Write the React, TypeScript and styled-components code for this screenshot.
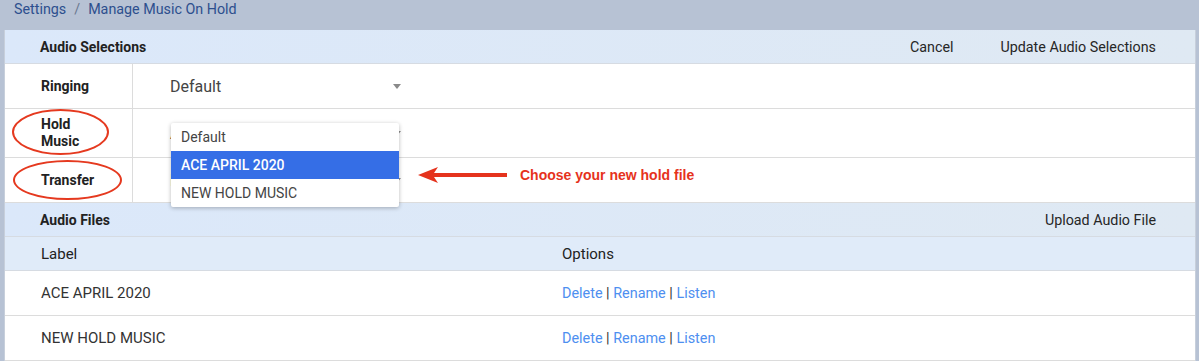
import styled, { createGlobalStyle } from 'styled-components'

const GlobalStyle = createGlobalStyle`
  html, body {
    margin: 0;
    padding: 0;
    background: #b7c2d4;
    font-family: Roboto, "Noto Sans", Arial, sans-serif;
  }
`

const Page = styled.main`
  width: 1199px;
  height: 361px;
  overflow: hidden;
`

const Breadcrumb = styled.nav`
  height: 30px;
  padding: 1px 0 0 14px;
  display: flex;
  align-items: flex-start;
  gap: 8px;
  font-size: 14.3px;
  line-height: 17px;
  box-sizing: border-box;
`

const Crumb = styled.span`
  color: #2d4f8e;
`

const CrumbSep = styled.span`
  color: #6a7890;
`

const Panel = styled.section`
  margin-left: 4px;
  width: 1190px;
  background: #fff;
  border: 1px solid #c7cfdb;
  border-top: none;
  border-bottom: none;
`

const SectionHeader = styled.div<{ $h: number }>`
  height: ${({ $h }) => $h}px;
  display: flex;
  align-items: center;
  justify-content: space-between;
  padding: 0 39px 0 35px;
  background: linear-gradient(90deg, #dbe8fa 0%, #dfe9f3 100%);
  border-bottom: 1px solid #d6dbe2;
  box-sizing: border-box;
`

const SectionTitle = styled.h2`
  margin: 0;
  font-size: 14px;
  font-weight: 700;
  color: #222;
`

const HeaderActions = styled.div`
  display: flex;
  gap: 47px;
`

const HeaderButton = styled.button`
  border: none;
  background: none;
  padding: 0;
  font-family: inherit;
  font-size: 14.3px;
  color: #262626;
  cursor: pointer;
`

const FieldRow = styled.div<{ $h: number }>`
  height: ${({ $h }) => $h}px;
  display: flex;
  border-bottom: 1px solid #dcdcdc;
  box-sizing: border-box;
`

const FieldLabel = styled.div`
  position: relative;
  width: 128px;
  flex-shrink: 0;
  display: flex;
  align-items: center;
  padding-left: 36px;
  box-sizing: border-box;
  border-right: 1px solid #dcdcdc;
  font-size: 14px;
  font-weight: 700;
  line-height: 17px;
  color: #222;
`

const Circle = styled.span<{ $l: number; $t: number; $w: number; $h: number }>`
  position: absolute;
  left: ${({ $l }) => $l}px;
  top: ${({ $t }) => $t}px;
  width: ${({ $w }) => $w}px;
  height: ${({ $h }) => $h}px;
  border: 2px solid #e5391f;
  border-radius: 50%;
  box-sizing: border-box;
  pointer-events: none;
`

const FieldValue = styled.div`
  position: relative;
  flex: 1;
  display: flex;
  align-items: center;
  padding-left: 37px;
`

const Select = styled.div`
  width: 232px;
  display: flex;
  align-items: center;
  justify-content: space-between;
  font-size: 16px;
  color: #444;
`

const Caret = styled.span`
  width: 0;
  height: 0;
  margin-right: 1px;
  border-left: 4px solid transparent;
  border-right: 4px solid transparent;
  border-top: 5px solid #8a8a8a;
`

const Menu = styled.ul`
  position: absolute;
  left: 38px;
  top: 14px;
  width: 228px;
  margin: 0;
  padding: 0;
  list-style: none;
  background: #fff;
  border-radius: 2px;
  box-shadow: 0 1px 4px rgba(0, 0, 0, 0.28);
  z-index: 5;
`

const MenuItem = styled.li<{ $active?: boolean }>`
  height: 28px;
  display: flex;
  align-items: center;
  padding-left: 10px;
  font-size: 14px;
  font-weight: ${({ $active }) => ($active ? 500 : 400)};
  color: ${({ $active }) => ($active ? '#fff' : '#444')};
  background: ${({ $active }) => ($active ? '#356ee6' : 'transparent')};
`

const Note = styled.div`
  display: flex;
  align-items: center;
  gap: 12px;
  margin: -11px 0 0 16px;
  font-family: "Liberation Sans", Arial, sans-serif;
  font-size: 14px;
  font-weight: 700;
  color: #e6321c;
`

const TableHead = styled.div`
  height: 34px;
  display: grid;
  grid-template-columns: 521px 1fr;
  align-items: center;
  padding-left: 36px;
  background: #e0ebf9;
  border-bottom: 1px solid #d6dbe2;
  box-sizing: border-box;
  font-size: 15px;
  color: #222;
`

const TableRow = styled.div`
  height: 45px;
  display: grid;
  grid-template-columns: 521px 1fr;
  align-items: center;
  padding-left: 36px;
  border-bottom: 1px solid #dcdcdc;
  box-sizing: border-box;
  font-size: 15px;
  color: #333;
`

const Options = styled.div`
  font-size: 14.4px;
  color: #333;
`

const OptionLink = styled.a`
  color: #4e8ff0;
  text-decoration: none;
  cursor: pointer;
`

const files = ['ACE APRIL 2020', 'NEW HOLD MUSIC']

const Arrow = () => (
  <svg width="90" height="18" viewBox="0 0 90 18">
    <path d="M0 9 L20 1 L16 7 L89 7 L89 11 L16 11 L20 17 Z" fill="#e5331d" />
  </svg>
)

export default function App() {
  return (
    <Page>
      <GlobalStyle />
      <Breadcrumb>
        <Crumb>Settings</Crumb>
        <CrumbSep>/</CrumbSep>
        <Crumb>Manage Music On Hold</Crumb>
      </Breadcrumb>

      <Panel>
        <SectionHeader $h={34}>
          <SectionTitle>Audio Selections</SectionTitle>
          <HeaderActions>
            <HeaderButton>Cancel</HeaderButton>
            <HeaderButton>Update Audio Selections</HeaderButton>
          </HeaderActions>
        </SectionHeader>

        <FieldRow $h={45}>
          <FieldLabel>Ringing</FieldLabel>
          <FieldValue>
            <Select>
              Default
              <Caret />
            </Select>
          </FieldValue>
        </FieldRow>

        <FieldRow $h={49}>
          <FieldLabel>
            Hold
            <br />
            Music
            <Circle $l={7} $t={0} $w={97} $h={46} />
          </FieldLabel>
          <FieldValue>
            <Select>
              ACE APRIL 2020
              <Caret />
            </Select>
            <Menu>
              <MenuItem>Default</MenuItem>
              <MenuItem $active>ACE APRIL 2020</MenuItem>
              <MenuItem>NEW HOLD MUSIC</MenuItem>
            </Menu>
          </FieldValue>
        </FieldRow>

        <FieldRow $h={45}>
          <FieldLabel>
            Transfer
            <Circle $l={8} $t={2} $w={109} $h={40} />
          </FieldLabel>
          <FieldValue>
            <Select>
              Default
              <Caret />
            </Select>
            <Note>
              <Arrow />
              Choose your new hold file
            </Note>
          </FieldValue>
        </FieldRow>

        <SectionHeader $h={34}>
          <SectionTitle>Audio Files</SectionTitle>
          <HeaderButton>Upload Audio File</HeaderButton>
        </SectionHeader>

        <TableHead>
          <span>Label</span>
          <span>Options</span>
        </TableHead>

        {files.map((file) => (
          <TableRow key={file}>
            <span>{file}</span>
            <Options>
              <OptionLink>Delete</OptionLink> | <OptionLink>Rename</OptionLink> |{' '}
              <OptionLink>Listen</OptionLink>
            </Options>
          </TableRow>
        ))}
      </Panel>
    </Page>
  )
}
